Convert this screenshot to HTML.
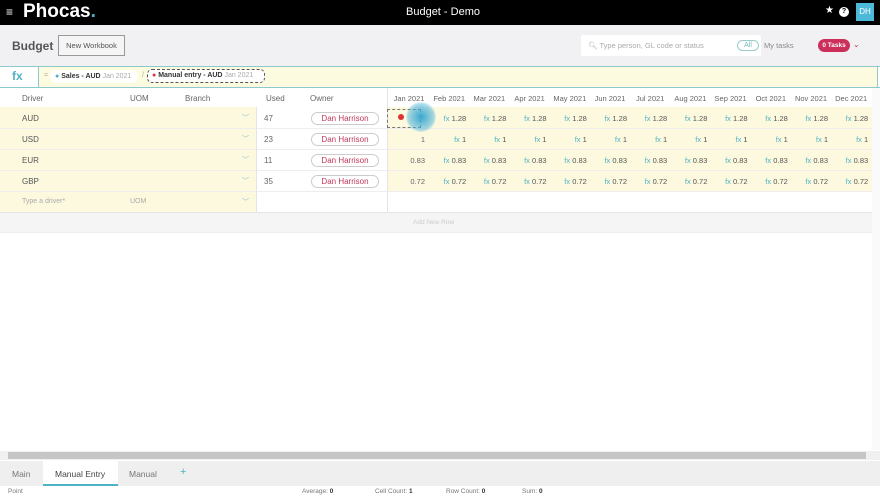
<!DOCTYPE html>
<html><head><style>
*{box-sizing:border-box;margin:0;padding:0}
body{width:880px;height:496px;overflow:hidden;font-family:"Liberation Sans",sans-serif;background:#fff;position:relative;color:#555}
.a{position:absolute;white-space:nowrap}
.top{left:0;top:0;width:880px;height:25px;background:#000}
.hdr{left:0;top:25px;width:880px;height:41px;background:#f1f0f3}
.fxbar{left:0;top:66px;width:880px;height:22px;background:#fff;border-top:1px solid #8cc8cc;border-bottom:1px solid #8cc8cc}
.l{font-size:8px;color:#666}
.m{font-size:7.5px;color:#555;text-align:right;width:40px}
.fx{color:#4fb3c6}
.pill{width:68px;height:13px;border:1px solid #ccc;border-radius:7px;font-size:8px;color:#c0395a;text-align:center;line-height:11px;background:#fff}
.chev{font-size:7px;color:#8bc}
</style></head><body>
<div class="a top"></div>
<div class="a" style="left:6px;top:5px;color:#fff;font-size:12px">≡</div>
<div class="a" style="left:23px;top:1px;color:#fff;font-size:19px;font-weight:bold">Phocas<span style="color:#4fb3c6">.</span></div>
<div class="a" style="left:406px;top:6px;color:#fff;font-size:11px">Budget - Demo</div>
<div class="a" style="left:825px;top:5px;color:#fff;font-size:10px">★</div>
<div class="a" style="left:839px;top:7px;width:10px;height:10px;border-radius:50%;background:#fff;color:#000;font-size:7px;text-align:center;line-height:10px;font-weight:bold">?</div>
<div class="a" style="left:856px;top:3px;width:18px;height:18px;background:#4db8d8;color:#fff;font-size:8px;text-align:center;line-height:18px">DH</div>
<div class="a hdr"></div>
<div class="a" style="left:12px;top:39px;font-size:12px;font-weight:bold;color:#555">Budget</div>
<div class="a" style="left:58px;top:35px;width:67px;height:21px;border:1px solid #999;background:#f5f5f5;font-size:7.5px;color:#555;text-align:center;line-height:19px">New Workbook</div>
<div class="a" style="left:581px;top:35px;width:180px;height:21px;background:#fff;border-radius:2px"></div>
<div class="a" style="left:588px;top:41px;font-size:7.5px;color:#aaa">🔍︎ Type person, GL code or status</div>
<div class="a" style="left:737px;top:40px;width:22px;height:11px;border:1px solid #9cc;border-radius:6px;font-size:7px;color:#7bb;text-align:center;line-height:9px">All</div>
<div class="a" style="left:764px;top:41px;font-size:7.5px;color:#888">My tasks</div>
<div class="a" style="left:818px;top:39px;width:32px;height:13px;background:#cc2f5a;border-radius:7px;color:#fff;font-size:6.5px;font-weight:bold;text-align:center;line-height:13px">0 Tasks</div>
<div class="a" style="left:853px;top:40px;font-size:8px;color:#cc2f5a">⌄</div>
<div class="a fxbar"></div>
<div class="a" style="left:12px;top:69px;font-size:12px;color:#4fb3c6;font-weight:bold">fx</div>
<div class="a" style="left:38px;top:66px;width:840px;height:22px;background:#fdfbdf;border:1px solid #8cc8cc"></div>
<div class="a" style="left:44px;top:72px;font-size:7px;color:#aa9">=</div>
<div class="a" style="left:50px;top:70px;height:13px;width:88px;background:#fff;border-radius:7px;font-size:7px;line-height:13px;padding-left:5px"><span style="color:#4fb3c6">●</span> <b style="color:#333">Sales - AUD</b> <span style="color:#aaa">Jan 2021</span></div>
<div class="a" style="left:142px;top:72px;font-size:7px;color:#aa9">/</div>
<div class="a" style="left:147px;top:69px;height:14px;width:118px;border:1px dashed #555;border-radius:5px;font-size:7px;line-height:12px;padding-left:4px;background:#fff"><span style="color:#d33">●</span> <b style="color:#333">Manual entry - AUD</b> <span style="color:#aaa">Jan 2021</span></div>
<div class="a l" style="left:22px;top:94px">Driver</div>
<div class="a l" style="left:130px;top:94px">UOM</div>
<div class="a l" style="left:185px;top:94px">Branch</div>
<div class="a l" style="left:266px;top:94px">Used</div>
<div class="a l" style="left:310px;top:94px">Owner</div>
<div class="a" style="left:0;top:107px;width:256px;height:106px;background:#fcf9df"></div>
<div class="a" style="left:388px;top:107px;width:484px;height:85px;background:#fcf9df"></div>
<div class="a" style="left:0;top:128px;width:872px;height:1px;background:#eee"></div>
<div class="a" style="left:0;top:149px;width:872px;height:1px;background:#eee"></div>
<div class="a" style="left:0;top:170px;width:872px;height:1px;background:#eee"></div>
<div class="a" style="left:0;top:191px;width:872px;height:1px;background:#eee"></div>
<div class="a" style="left:0;top:212px;width:872px;height:1px;background:#e5e5e5"></div>
<div class="a" style="left:387px;top:88px;width:1px;height:125px;background:#e5e5e5"></div>
<div class="a" style="left:256px;top:107px;width:1px;height:106px;background:#e5e5e5"></div>
<div class="a" style="left:0;top:213px;width:872px;height:20px;background:#f5f5f5;border-bottom:1px solid #eee"></div>
<div class="a" style="left:413px;top:219px;font-size:6.5px;color:#ccc">Add New Row</div>
<div id="rows"></div>
<div class="a" style="left:387px;top:109px;width:34px;height:19px;border:1px dashed #777"></div>
<div class="a" style="left:398px;top:114px;width:6px;height:6px;border-radius:50%;background:#d33"></div>
<div class="a" style="left:406px;top:102px;width:30px;height:30px;border-radius:50%;background:radial-gradient(#3aa8d0,rgba(80,180,220,.5) 60%,rgba(80,180,220,0) 75%)"></div>
<div class="a" style="left:872px;top:88px;width:8px;height:362px;background:#fafafa"></div>
<div class="a" style="left:0;top:451px;width:880px;height:9px;background:#f0f0f0"></div>
<div class="a" style="left:8px;top:452px;width:858px;height:7px;background:#c6c6c6"></div>
<div class="a" style="left:0;top:461px;width:880px;height:25px;background:#efefef"></div>
<div class="a" style="left:43px;top:461px;width:75px;height:25px;background:#fff;border-bottom:2px solid #4fb3c6"></div>
<div class="a" style="left:12px;top:469px;font-size:8.5px;color:#777">Main</div>
<div class="a" style="left:55px;top:469px;font-size:8.5px;color:#444">Manual Entry</div>
<div class="a" style="left:129px;top:469px;font-size:8.5px;color:#777">Manual</div>
<div class="a" style="left:180px;top:466px;font-size:11px;color:#4fb3c6">+</div>
<div class="a" style="left:0;top:486px;width:880px;height:10px;background:#fff"></div>
<div class="a" style="left:8px;top:488px;font-size:6.5px;color:#777">Point</div>
<div class="a" style="left:302px;top:488px;font-size:6.5px;color:#777">Average: <b style="color:#333">0</b></div>
<div class="a" style="left:375px;top:488px;font-size:6.5px;color:#777">Cell Count: <b style="color:#333">1</b></div>
<div class="a" style="left:446px;top:488px;font-size:6.5px;color:#777">Row Count: <b style="color:#333">0</b></div>
<div class="a" style="left:522px;top:488px;font-size:6.5px;color:#777">Sum: <b style="color:#333">0</b></div>
<script>
var months=["Jan","Feb","Mar","Apr","May","Jun","Jul","Aug","Sep","Oct","Nov","Dec"];
var h="";
months.forEach(function(m,i){h+='<div class="a m" style="left:'+(389+i*40.2)+'px;top:94px;color:#666;text-align:center">'+m+' 2021</div>';});
var rows=[["AUD","47","1.28"],["USD","23","1"],["EUR","11","0.83"],["GBP","35","0.72"]];
rows.forEach(function(r,j){var y=108+j*21;
h+='<div class="a l" style="left:22px;top:'+(y+6)+'px;color:#555">'+r[0]+'</div>';
h+='<div class="a chev" style="left:242px;top:'+(y+5)+'px">﹀</div>';
h+='<div class="a l" style="left:264px;top:'+(y+6)+'px">'+r[1]+'</div>';
h+='<div class="a pill" style="left:311px;top:'+(y+4)+'px">Dan Harrison</div>';
if(j>0)h+='<div class="a m" style="left:385px;top:'+(y+6)+'px;color:#666">'+r[2]+'</div>';
for(var i=1;i<12;i++)h+='<div class="a m" style="left:'+(386+i*40.2)+'px;top:'+(y+6)+'px"><span class="fx">fx</span> '+r[2]+'</div>';
});
h+='<div class="a" style="left:22px;top:198px;font-size:7px;color:#aaa">Type a driver*</div>';
h+='<div class="a" style="left:130px;top:198px;font-size:7px;color:#aaa">UOM</div>';
h+='<div class="a chev" style="left:242px;top:197px">﹀</div>';
document.getElementById("rows").innerHTML=h;
</script>
</body></html>
